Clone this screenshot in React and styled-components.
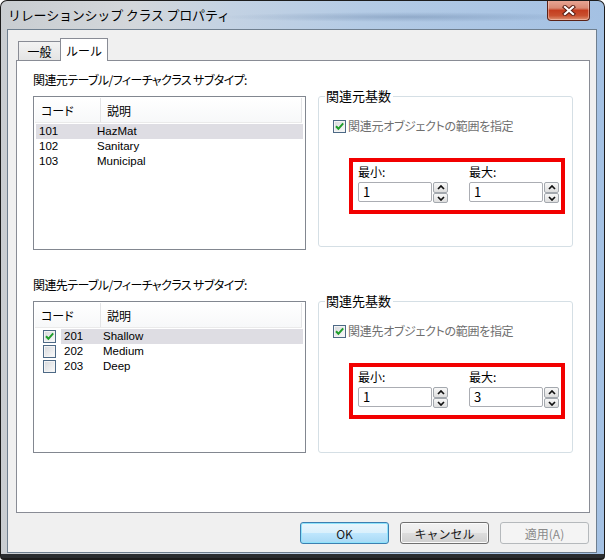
import styled, { createGlobalStyle } from "styled-components";

const GlobalStyle = createGlobalStyle`
  html, body {
    margin: 0;
    padding: 0;
    background: #fff;
  }
  body {
    font-family: "Noto Sans CJK JP", "Liberation Sans", sans-serif;
    font-size: 12px;
    color: #000;
  }
  * {
    box-sizing: border-box;
  }
`;

const Window = styled.div`
  width: 605px;
  height: 560px;
  display: flex;
  flex-direction: column;
  padding: 0 7px 5px 6px;
  border: 1px solid #1c1c1c;
  border-bottom-width: 2px;
  border-radius: 7px 7px 4px 4px;
  overflow: hidden;
  background:
    linear-gradient(0deg, #2a2d30 0, #2a2d30 4px, transparent 4px),
    linear-gradient(90deg, #c9cdd1 0%, #d3d7db 22%, #c3d2e3 38%, #b4cbe5 60%, #a4c1e3 100%);
`;

const TitleBar = styled.div`
  height: 28px;
  flex: none;
  display: flex;
  align-items: flex-start;
  background: radial-gradient(ellipse 190px 5px at 400px 16px, rgba(84, 112, 150, 0.35), transparent);
`;

const TitleText = styled.div`
  padding-left: 1px;
  line-height: 28px;
  font-size: 13px;
  color: #000;
  letter-spacing: -0.2px;
`;

const CloseButton = styled.div`
  margin: -1px 7px 0 auto;
  width: 43px;
  height: 21px;
  display: flex;
  align-items: center;
  justify-content: center;
  border: 1px solid #5b2116;
  border-top: 0;
  border-radius: 0 0 4px 4px;
  background: linear-gradient(180deg, #e9a897 0%, #d98a74 40%, #c43d1f 52%, #c9502f 78%, #de9374 100%);
  box-shadow: inset 0 0 0 1px rgba(255, 220, 210, 0.45);
`;

const Client = styled.div`
  flex: 1;
  display: flex;
  flex-direction: column;
  background: #f0f0f0;
  border: 1px solid #6f7f8f;
  padding: 8px 6px 0 8px;
`;

const TabRow = styled.div`
  display: flex;
  align-items: flex-end;
  height: 23px;
  padding-left: 2px;
  margin-bottom: -1px;
  position: relative;
  z-index: 1;
`;

const Tab = styled.div`
  display: flex;
  align-items: center;
  justify-content: center;
  width: ${(p) => (p.$active ? 48 : 42)}px;
  height: ${(p) => (p.$active ? 23 : 19)}px;
  margin-bottom: ${(p) => (p.$active ? 0 : 1)}px;
  border: 1px solid #898c95;
  border-bottom: 0;
  border-right-width: ${(p) => (p.$active ? 1 : 0)}px;
  background: ${(p) => (p.$active ? "#fff" : "linear-gradient(180deg, #f3f3f3, #e4e4e4)")};
  padding-top: ${(p) => (p.$active ? 0 : 1)}px;
`;

const Panel = styled.div`
  height: 453px;
  flex: none;
  border: 1px solid #898c95;
  background: #fff;
  padding: 11px 0 0 16px;
`;

const Section = styled.div`
  display: grid;
  grid-template-columns: 273px 255px;
  column-gap: 12px;

  & + & {
    margin-top: 27px;
  }
`;

const SectionLabel = styled.div`
  grid-column: 1;
  line-height: 16px;
  height: 16px;
  margin-bottom: 8px;
  letter-spacing: -0.6px;
  font-feature-settings: "palt";
`;

const ListBox = styled.div`
  grid-column: 1;
  grid-row: 2;
  height: ${(p) => p.$height}px;
  border: 1px solid #828790;
  padding: 1px;
  background: #fff;
`;

const ListHeader = styled.div`
  display: flex;
  height: 25px;
  border-bottom: 1px solid #eaeaea;
  background: linear-gradient(180deg, #fff, #f7f8f9);
  margin-right: 2px;
`;

const HeadCell = styled.div`
  width: ${(p) => (p.$width ? `${p.$width}px` : "auto")};
  flex: ${(p) => (p.$width ? "none" : 1)};
  padding: 3px 0 0 6px;
  line-height: 20px;
  border-right: 1px solid #e3e4e6;
  font-feature-settings: "palt";
`;

const Rows = styled.div`
  padding-top: 1px;
  font-family: "Liberation Sans", sans-serif;
  font-size: 11.5px;
`;

const Row = styled.div`
  display: flex;
  align-items: center;
  height: 15px;
  line-height: 15px;
  margin: 0 1px;
  padding-left: ${(p) => (p.$checks ? 7 : 3)}px;
  background: ${(p) => (p.$selected && !p.$checks ? "#dedde3" : "transparent")};
`;

const RowBody = styled.div`
  flex: 1;
  display: flex;
  height: 15px;
  margin-left: 5px;
  padding-left: 3px;
  background: ${(p) => (p.$selected ? "#dedde3" : "transparent")};
`;

const Cell = styled.div`
  width: ${(p) => (p.$width ? `${p.$width}px` : "auto")};
  flex: none;
`;

const GroupBox = styled.div`
  grid-column: 2;
  grid-row: 2;
  height: ${(p) => p.$height}px;
  border: 1px solid #d5dfe5;
  border-radius: 3px;
  padding: 0 0 0 14px;
`;

const Legend = styled.div`
  width: fit-content;
  margin: -9px 0 0 -8px;
  padding: 0 2px 0 1px;
  line-height: 16px;
  font-size: 13px;
  background: #fff;
`;

const CheckLine = styled.div`
  display: flex;
  align-items: center;
  gap: 2px;
  margin-top: 14px;
  line-height: 16px;
  color: #6f6f6f;
  letter-spacing: -0.3px;
  font-feature-settings: "palt";
`;

const RedBox = styled.div`
  width: 216px;
  height: 56px;
  margin: 24px 0 0 16px;
  border: 4px solid #f20000;
  display: flex;
  gap: 21px;
  padding: 2px 0 0 5px;
`;

const Field = styled.div`
  display: flex;
  flex-direction: column;
`;

const FieldLabel = styled.div`
  line-height: 15px;
  height: 15px;
`;

const InputRow = styled.div`
  display: flex;
  margin-top: 3px;
`;

const Input = styled.div`
  width: 74px;
  height: 20px;
  border: 1px solid #abadb3;
  border-radius: 2px;
  padding-left: 4px;
  line-height: 18px;
  font-size: 13px;
  background: #fff;
`;

const Spin = styled.div`
  display: flex;
  flex-direction: column;
  width: 15px;
  height: 21px;
  margin-left: 1px;
`;

const SpinButton = styled.div`
  height: ${(p) => p.$h}px;
  display: flex;
  align-items: center;
  justify-content: center;
  border: 1px solid #a3a8ae;
  border-radius: 2px;
  background: linear-gradient(180deg, #f8f8f8, #dedede);
`;

const ButtonRow = styled.div`
  display: flex;
  justify-content: flex-end;
  gap: 11px;
  margin: 9px 1px 0 0;
`;

const Button = styled.div`
  width: 89px;
  height: 22px;
  display: flex;
  align-items: center;
  justify-content: center;
  border-radius: 3px;
  font-size: 12px;
  border: 1px solid ${(p) => (p.$variant === "default" ? "#3c7fb1" : p.$variant === "disabled" ? "#b5b9bc" : "#707070")};
  color: ${(p) => (p.$variant === "disabled" ? "#8a8a8a" : "#1a1a1a")};
  background: ${(p) =>
    p.$variant === "default"
      ? "linear-gradient(180deg, #eaf6fd 0%, #d9f0fc 50%, #bee6fd 51%, #a7d9f5 100%)"
      : p.$variant === "disabled"
      ? "#f4f4f4"
      : "linear-gradient(180deg, #f2f2f2 0%, #ebebeb 50%, #dddddd 51%, #cfcfcf 100%)"};
  box-shadow: inset 0 0 0 1px
    ${(p) => (p.$variant === "default" ? "#8fe3fb" : p.$variant === "disabled" ? "#f4f4f4" : "#fbfbfb")};
`;

const CloseGlyph = () => (
  <svg width="14" height="11" viewBox="0 0 14 11">
    <path d="M3 2 L11 9 M11 2 L3 9" stroke="#5a1f14" strokeWidth="4.2" strokeLinecap="square" />
    <path d="M3 2 L11 9 M11 2 L3 9" stroke="#fff" strokeWidth="2.2" strokeLinecap="square" />
  </svg>
);

const CheckBox = ({ checked }) => (
  <svg width="13" height="13" viewBox="0 0 13 13" style={{ flex: "none" }}>
    <defs>
      <linearGradient id="cbfill" x1="0" y1="0" x2="1" y2="1">
        <stop offset="0" stopColor="#d9dbde" />
        <stop offset="1" stopColor="#f8f8f8" />
      </linearGradient>
    </defs>
    <rect x="0.5" y="0.5" width="12" height="12" fill="#f4f4f4" stroke="#4d6985" />
    <rect x="2" y="2" width="9" height="9" fill="url(#cbfill)" />
    {checked && (
      <path d="M3 6.3 L5.4 8.8 L10.2 3.4" fill="none" stroke="#1e9e2a" strokeWidth="2" />
    )}
  </svg>
);

const Arrow = ({ down }) => (
  <svg width="8" height="5" viewBox="0 0 8 5">
    <path
      d={down ? "M1 1 L4 4 L7 1" : "M1 4 L4 1 L7 4"}
      fill="none"
      stroke="#111"
      strokeWidth="1.7"
    />
  </svg>
);

const NumberField = ({ label, value }) => (
  <Field>
    <FieldLabel>{label}</FieldLabel>
    <InputRow>
      <Input>{value}</Input>
      <Spin>
        <SpinButton $h={11}>
          <Arrow />
        </SpinButton>
        <SpinButton $h={10}>
          <Arrow down />
        </SpinButton>
      </Spin>
    </InputRow>
  </Field>
);

const Cardinality = ({ title, check, max, height }) => (
  <GroupBox $height={height}>
    <Legend>{title}</Legend>
    <CheckLine>
      <CheckBox checked />
      {check}
    </CheckLine>
    <RedBox>
      <NumberField label="最小:" value="1" />
      <NumberField label="最大:" value={max} />
    </RedBox>
  </GroupBox>
);

const originRows = [
  ["101", "HazMat"],
  ["102", "Sanitary"],
  ["103", "Municipal"],
];

const destRows = [
  ["201", "Shallow", true],
  ["202", "Medium", false],
  ["203", "Deep", false],
];

export default function App() {
  return (
    <>
      <GlobalStyle />
      <Window>
        <TitleBar>
          <TitleText>リレーションシップ クラス プロパティ</TitleText>
          <CloseButton>
            <CloseGlyph />
          </CloseButton>
        </TitleBar>
        <Client>
          <TabRow>
            <Tab>一般</Tab>
            <Tab $active>ルール</Tab>
          </TabRow>
          <Panel>
            <Section>
              <SectionLabel>関連元テーブル/フィーチャクラス サブタイプ:</SectionLabel>
              <ListBox $height={154}>
                <ListHeader>
                  <HeadCell $width={66}>コード</HeadCell>
                  <HeadCell>説明</HeadCell>
                </ListHeader>
                <Rows>
                  {originRows.map(([code, desc], i) => (
                    <Row key={code} $selected={i === 0}>
                      <Cell $width={58}>{code}</Cell>
                      <Cell>{desc}</Cell>
                    </Row>
                  ))}
                </Rows>
              </ListBox>
              <Cardinality
                title="関連元基数"
                check="関連元オブジェクトの範囲を指定"
                max="1"
                height={151}
              />
            </Section>
            <Section>
              <SectionLabel>関連先テーブル/フィーチャクラス サブタイプ:</SectionLabel>
              <ListBox $height={152}>
                <ListHeader>
                  <HeadCell $width={66}>コード</HeadCell>
                  <HeadCell>説明</HeadCell>
                </ListHeader>
                <Rows>
                  {destRows.map(([code, desc, on], i) => (
                    <Row key={code} $checks>
                      <CheckBox checked={on} />
                      <RowBody $selected={i === 0}>
                        <Cell $width={39}>{code}</Cell>
                        <Cell>{desc}</Cell>
                      </RowBody>
                    </Row>
                  ))}
                </Rows>
              </ListBox>
              <Cardinality
                title="関連先基数"
                check="関連先オブジェクトの範囲を指定"
                max="3"
                height={152}
              />
            </Section>
          </Panel>
          <ButtonRow>
            <Button $variant="default">OK</Button>
            <Button>キャンセル</Button>
            <Button $variant="disabled">適用(A)</Button>
          </ButtonRow>
        </Client>
      </Window>
    </>
  );
}
